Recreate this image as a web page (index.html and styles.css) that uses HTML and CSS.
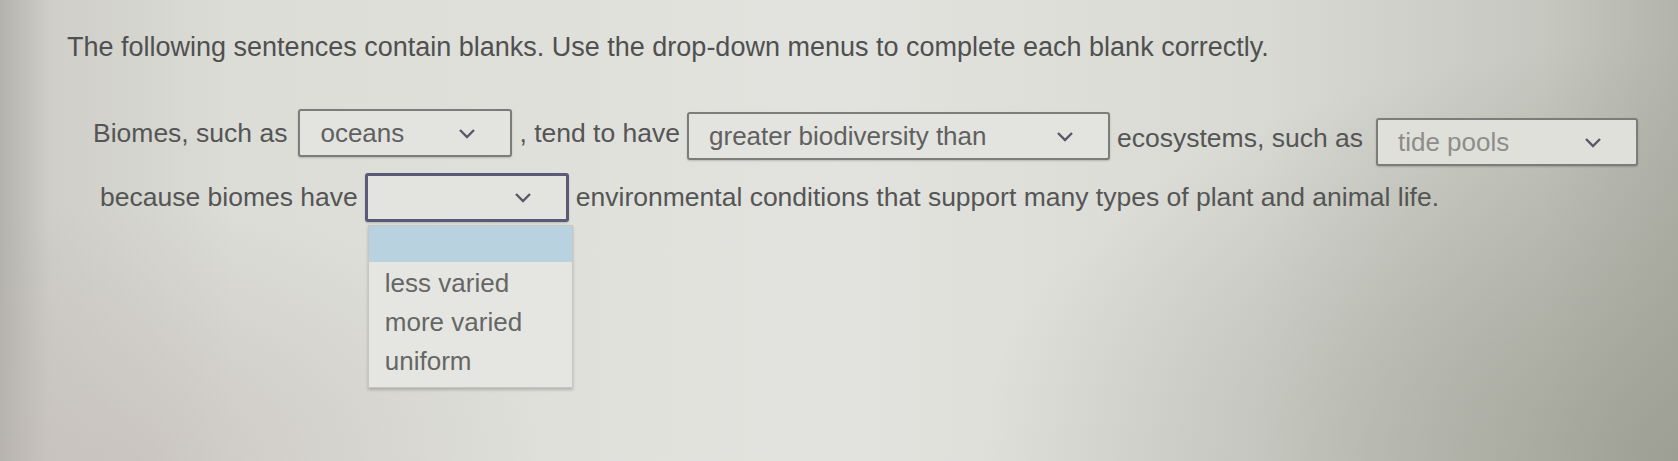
FILE: index.html
```html
<!DOCTYPE html>
<html lang="en">
<head>
    <meta charset="UTF-8">
    <meta name="viewport" content="width=device-width, initial-scale=1.0">
    <title>Fill in the Blanks</title>
    <link rel="stylesheet" href="styles.css">
</head>
<body>
    <p class="prompt">The following sentences contain blanks. Use the drop-down menus to complete each blank correctly.</p>

    <div class="sentence sentence-one">
        <span class="words">Biomes, such as</span>
        <div class="blank blank-biome">
            <span class="blank-value">oceans</span>
            <svg class="chevron" viewBox="0 0 18 11"><path d="M2 2 L9 9 L16 2"/></svg>
        </div>
        <span class="words">, tend to have</span>
        <div class="blank blank-compare">
            <span class="blank-value">greater biodiversity than</span>
            <svg class="chevron" viewBox="0 0 18 11"><path d="M2 2 L9 9 L16 2"/></svg>
        </div>
        <span class="words words-low">ecosystems, such as</span>
        <div class="blank blank-eco">
            <span class="blank-value faded">tide pools</span>
            <svg class="chevron" viewBox="0 0 18 11"><path d="M2 2 L9 9 L16 2"/></svg>
        </div>
    </div>

    <div class="sentence sentence-two">
        <span class="words">because biomes have</span>
        <div class="blank blank-open">
            <span class="blank-value"></span>
            <svg class="chevron" viewBox="0 0 18 11"><path d="M2 2 L9 9 L16 2"/></svg>
            <!-- Open menu for this blank -->
            <ul class="menu">
                <li class="menu-item selected"></li>
                <li class="menu-item">less varied</li>
                <li class="menu-item">more varied</li>
                <li class="menu-item">uniform</li>
            </ul>
        </div>
        <span class="words">environmental conditions that support many types of plant and animal life.</span>
    </div>
</body>
</html>
```

FILE: styles.css
```css
/* Global settings */
:root {
    --color-text: #555;
    --color-border: #7c7c7a;
    --color-focus: #5a5a78;
    --font-default: 'Liberation Sans', Arial, sans-serif;
}

html, body {
    height: 100%;
}

body {
    margin: 0;
    font-family: var(--font-default);
    font-size: 26.5px;
    color: var(--color-text);
    background:
        radial-gradient(ellipse 700px 420px at 100% 100%, rgba(150, 152, 140, 0.75), rgba(150, 152, 140, 0) 100%),
        radial-gradient(ellipse 420px 260px at 8% 100%, rgba(190, 180, 176, 0.5), rgba(190, 180, 176, 0) 100%),
        linear-gradient(90deg, #b3b2ac 0%, #cfcec8 3%, #dcddd7 14%, #e2e3de 50%, #d9dad4 75%, #c6c7bf 92%, #b3b4ab 100%);
    overflow: hidden;
}

.prompt {
    margin: 0;
    padding: 32px 0 0 67px;
    font-size: 27px;
    line-height: 31px;
    color: #505050;
}

/* Sentence rows */
.sentence {
    display: flex;
    align-items: flex-start;
}

.sentence-one {
    margin-top: 46px;
    padding-left: 93px;
}

.sentence-two {
    margin-top: 7px;
    padding-left: 100px;
}

.words {
    margin-top: 9px;
    line-height: 30px;
    white-space: nowrap;
}

.words-low {
    margin-top: 14px;
}

/* Drop-down blanks */
.blank {
    position: relative;
    display: flex;
    align-items: center;
    justify-content: space-between;
    box-sizing: border-box;
    height: 48px;
    margin: 0 7px;
    padding: 0 34px 0 20px;
    border: 2px solid var(--color-border);
    border-radius: 3px;
    background-color: #e3e4df;
    box-shadow: 0 1px 2px rgba(0, 0, 0, 0.18);
    font-size: 26px;
    color: #606060;
}

.blank-biome {
    width: 214px;
    margin-left: 11px;
}

.blank-compare {
    width: 423px;
    margin-top: 3px;
}

.blank-eco {
    width: 262px;
    margin-top: 9px;
    margin-left: 13px;
    background-color: #dfe0da;
}

.blank-open {
    width: 204px;
    height: 49px;
    border: 3px solid var(--color-focus);
}

.blank-value.faded {
    color: #8d8d8b;
}

.chevron {
    width: 18px;
    height: 11px;
    fill: none;
    stroke: #585868;
    stroke-width: 2.4;
}

/* Open menu */
.menu {
    position: absolute;
    top: 49px;
    left: 0;
    width: 203px;
    margin: 0;
    padding: 0 0 6px;
    list-style: none;
    background-color: #e5e6e1;
    border: 1px solid #c6c6c2;
    box-shadow: 0 2px 3px rgba(0, 0, 0, 0.2);
    z-index: 2;
}

.menu-item {
    height: 39px;
    line-height: 39px;
    padding-left: 16px;
    color: #666;
}

.menu-item.selected {
    height: 36px;
    margin-bottom: 2px;
    background-color: #b9d2df;
}
```
